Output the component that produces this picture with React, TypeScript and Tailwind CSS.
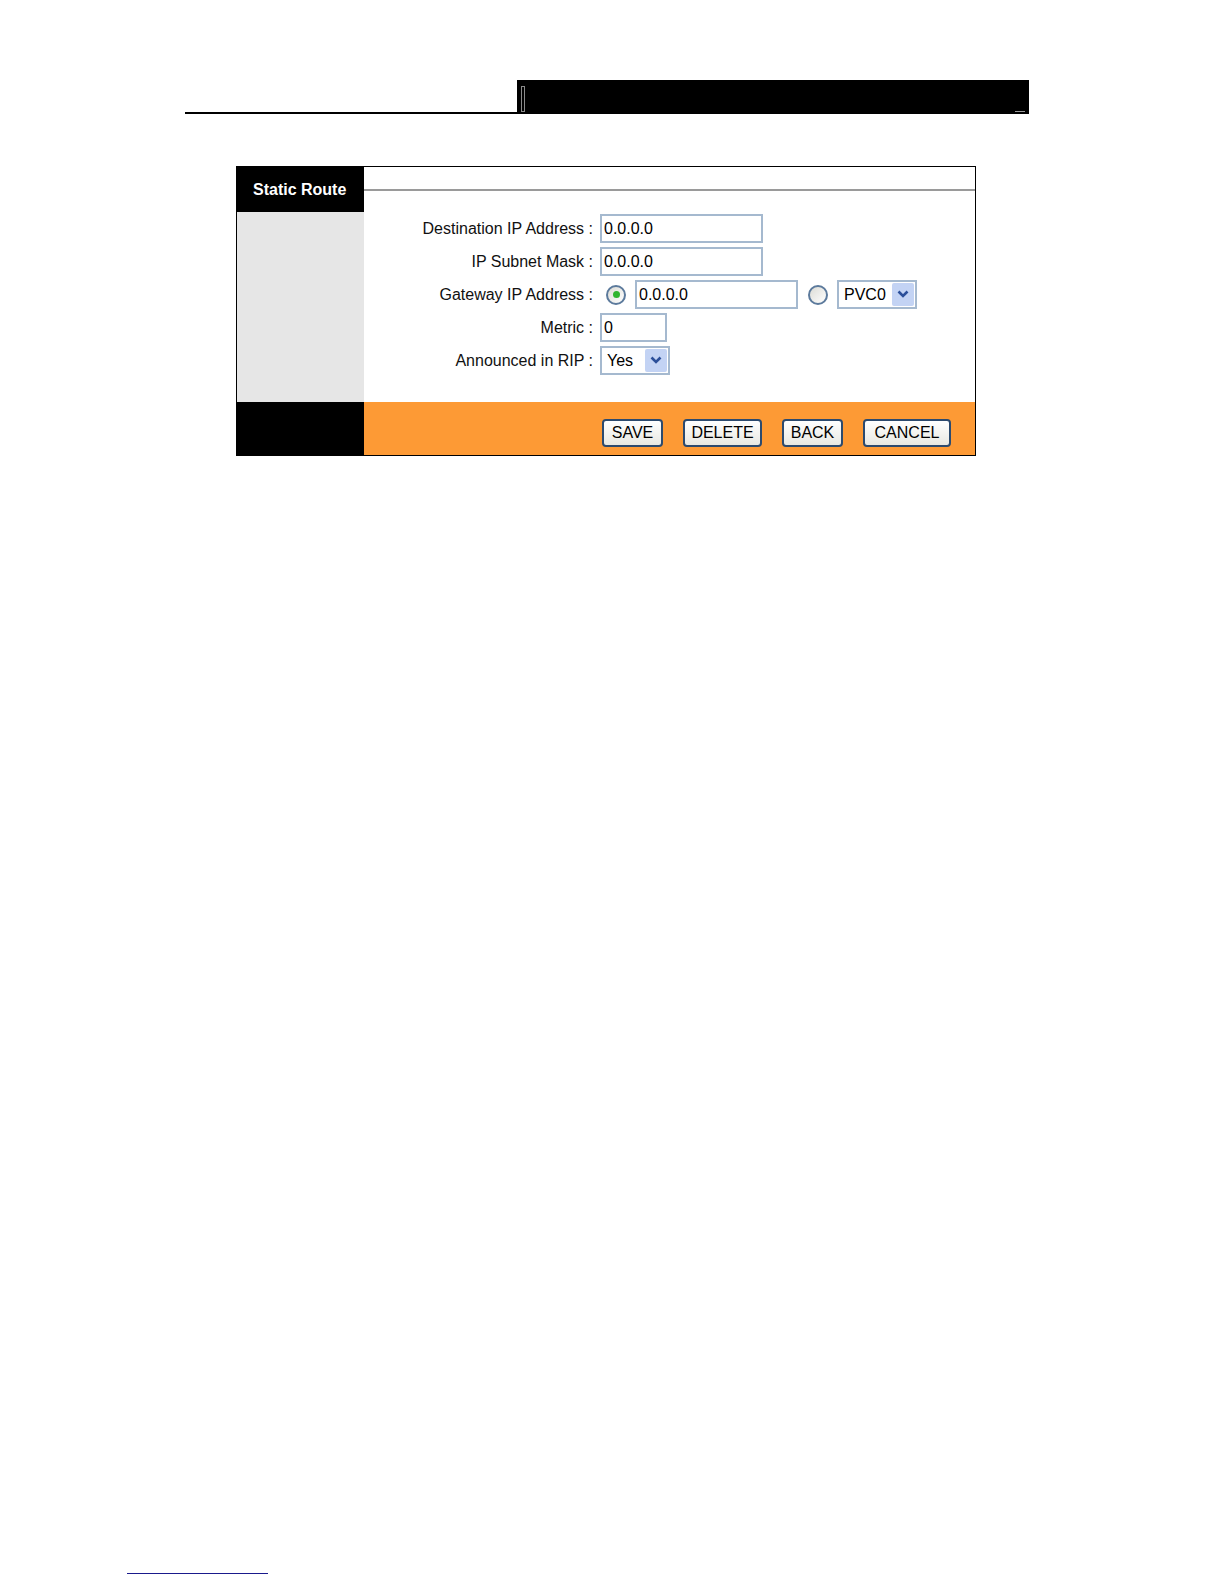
import React from "react";

const font = { fontFamily: '"Liberation Sans", Arial, sans-serif' };

function TextBox({ value, width }: { value: string; width: string }) {
  return (
    <div
      className={`h-[29px] ${width} border-2 border-[#a5b9cf] bg-white pl-[2px] text-[16px] leading-[25px] text-black`}
    >
      {value}
    </div>
  );
}

function Chevron() {
  return (
    <svg width="12" height="9" viewBox="0 0 12 9">
      <path d="M1.5 1.5 L6 6 L10.5 1.5" fill="none" stroke="#2b4f9a" strokeWidth="2.6" />
    </svg>
  );
}

function SelectBox({ value, width }: { value: string; width: string }) {
  return (
    <div
      className={`flex h-[29px] ${width} items-center justify-between border-2 border-[#a5b9cf] bg-white pl-[5px] pr-[1px] text-[16px] text-black`}
    >
      <span>{value}</span>
      <span className="flex h-[23px] w-[22px] items-center justify-center rounded-[2px] bg-[#c3d3f4]">
        <Chevron />
      </span>
    </div>
  );
}

function Radio({ checked }: { checked?: boolean }) {
  return (
    <span className="flex h-[20px] w-[20px] items-center justify-center rounded-full border-2 border-[#5c7a9c] bg-gradient-to-br from-[#dcdcd6] to-white">
      {checked && <span className="h-[7px] w-[7px] rounded-full bg-[#2fb52f]" />}
    </span>
  );
}

function Button({ label, width }: { label: string; width: string }) {
  return (
    <button
      className={`h-[28px] ${width} rounded-[4px] border-2 border-[#2c4a6e] bg-gradient-to-b from-white to-[#e8e8e2] text-[16px] leading-none text-black`}
    >
      {label}
    </button>
  );
}

export default function App() {
  return (
    <div className="w-full overflow-hidden bg-white" style={font}>
      {/* page header */}
      <div className="flex items-end pl-[185px] pt-[80px]">
        <div className="h-[2px] w-[332px] bg-black" />
        <div className="relative h-[34px] w-[512px] bg-black">
          <span className="absolute left-[4px] top-[6px] h-[26px] w-[4px] border border-[#8a8a8a]" />
          <span className="absolute bottom-[2px] right-[4px] h-[1px] w-[10px] bg-[#9a9a9a]" />
        </div>
      </div>

      {/* static route panel */}
      <div className="ml-[236px] mt-[52px] w-[740px] border border-black">
        <div className="flex h-[235px]">
          <div className="flex w-[127px] flex-col">
            <div className="flex h-[45px] items-center bg-black pl-[16px] text-[16px] font-bold text-white">
              Static Route
            </div>
            <div className="flex-1 bg-[#e6e6e6]" />
          </div>
          <div className="flex-1 bg-white">
            <div className="mt-[22px] h-[2px] bg-[#9a9a9a]" />
            <div className="mt-[23px] grid grid-cols-[229px_auto] items-center gap-x-[7px] gap-y-[4px] text-[16px] text-[#111]">
              <div className="text-right">Destination IP Address :</div>
              <TextBox value="0.0.0.0" width="w-[163px]" />

              <div className="text-right">IP Subnet Mask :</div>
              <TextBox value="0.0.0.0" width="w-[163px]" />

              <div className="text-right">Gateway IP Address :</div>
              <div className="flex items-center">
                <span className="ml-[6px] mr-[9px]">
                  <Radio checked />
                </span>
                <TextBox value="0.0.0.0" width="w-[163px]" />
                <span className="ml-[10px] mr-[9px]">
                  <Radio />
                </span>
                <SelectBox value="PVC0" width="w-[80px]" />
              </div>

              <div className="text-right">Metric :</div>
              <TextBox value="0" width="w-[67px]" />

              <div className="text-right">Announced in RIP :</div>
              <SelectBox value="Yes" width="w-[70px]" />
            </div>
          </div>
        </div>
        <div className="flex h-[53px]">
          <div className="w-[127px] bg-black" />
          <div className="flex flex-1 items-start justify-end gap-[20px] bg-[#fd9a35] pr-[24px] pt-[17px]">
            <Button label="SAVE" width="w-[61px]" />
            <Button label="DELETE" width="w-[79px]" />
            <Button label="BACK" width="w-[61px]" />
            <Button label="CANCEL" width="w-[88px]" />
          </div>
        </div>
      </div>

      {/* footer rule */}
      <div className="ml-[127px] mt-[1117px] h-[1px] w-[141px] bg-[#1a1a8c]" />
      <div className="h-[6px]" />
    </div>
  );
}
